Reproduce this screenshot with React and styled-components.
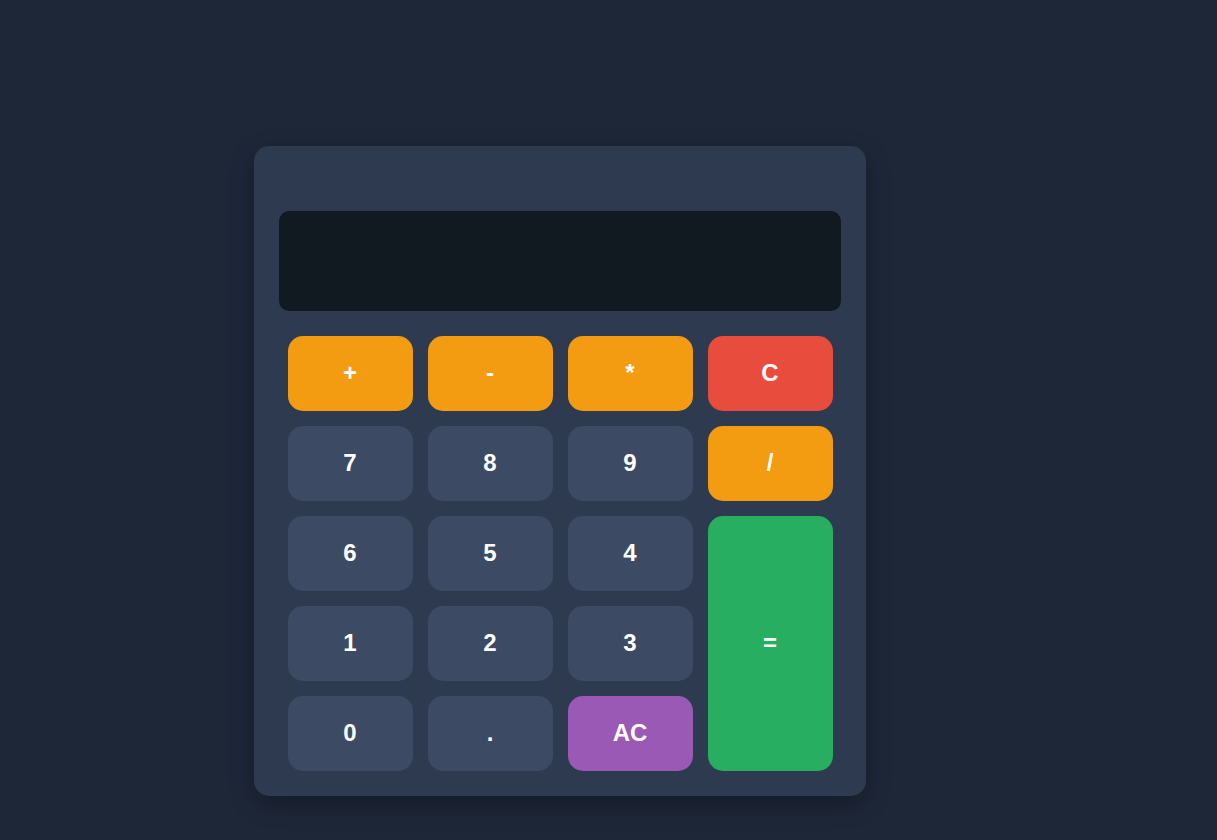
import React from "react"
import styled, { createGlobalStyle } from "styled-components"

const GlobalStyle = createGlobalStyle`
  html, body {
    margin: 0;
    background: #1e2738;
    font-family: "Liberation Sans", Arial, sans-serif;
  }
`

const Page = styled.div`
  min-height: 840px;
  box-sizing: border-box;
  padding: 146px 0 0 254px;
`

const Calculator = styled.div`
  width: 612px;
  box-sizing: border-box;
  padding: 25px;
  background: #2e3a4f;
  border-radius: 15px;
  box-shadow: 0 8px 24px rgba(0, 0, 0, 0.3);
`

const Header = styled.div`
  height: 40px;
`

const Display = styled.div`
  height: 100px;
  background: #111921;
  border-radius: 10px;
  margin-bottom: 25px;
`

const Keys = styled.div`
  display: grid;
  grid-template-columns: repeat(4, 125px);
  grid-auto-rows: 75px;
  gap: 15px;
  justify-content: center;
`

const colors = {
  num: "#3c4a63",
  op: "#f39c12",
  clear: "#e74c3c",
  all: "#9b59b6",
  eq: "#27ae60",
}

const Key = styled.button`
  border: none;
  border-radius: 15px;
  background: ${(p) => colors[p.$kind || "num"]};
  color: #fff;
  font-family: "Liberation Sans", Arial, sans-serif;
  font-weight: bold;
  font-size: 24px;
  padding: 0 0 1px;
  cursor: pointer;
  grid-row: ${(p) => (p.$tall ? "span 3" : "auto")};
`

export default function App() {
  return (
    <Page>
      <GlobalStyle />
      <Calculator>
        <Header />
        <Display />
        <Keys>
          <Key $kind="op">+</Key>
          <Key $kind="op">-</Key>
          <Key $kind="op">*</Key>
          <Key $kind="clear">C</Key>
          <Key>7</Key>
          <Key>8</Key>
          <Key>9</Key>
          <Key $kind="op">/</Key>
          <Key>6</Key>
          <Key>5</Key>
          <Key>4</Key>
          <Key $kind="eq" $tall>=</Key>
          <Key>1</Key>
          <Key>2</Key>
          <Key>3</Key>
          <Key>0</Key>
          <Key>.</Key>
          <Key $kind="all">AC</Key>
        </Keys>
      </Calculator>
    </Page>
  )
}
